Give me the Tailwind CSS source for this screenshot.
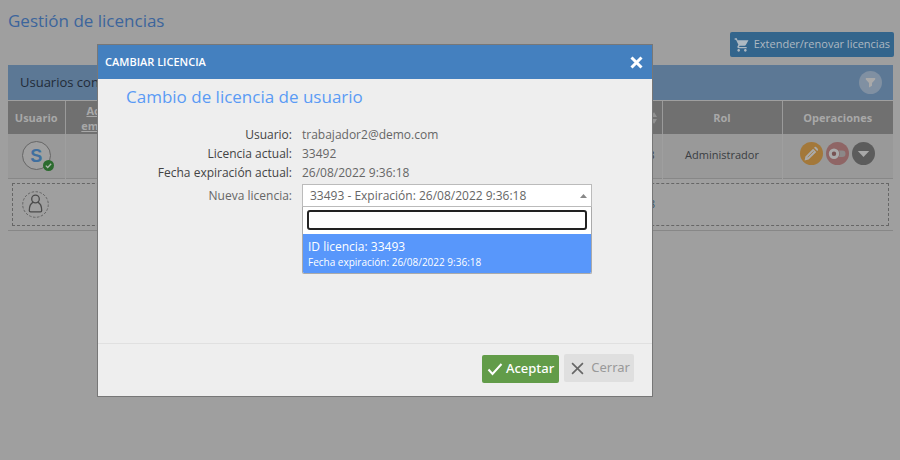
<!DOCTYPE html>
<html lang="es">
<head>
    <meta charset="UTF-8">
    <title>Gestión de licencias</title>
    <meta name="viewport" content="width=device-width, initial-scale=1.0">
    <script src="https://cdn.jsdelivr.net/npm/@tailwindcss/browser@4"></script>
</head>
<body class="min-h-screen bg-[#9f9f9f] font-['Open_Sans',sans-serif] text-xs text-[#3a3d42]">

    <main class="pl-2 pr-[6px] pt-2">
        <h1 class="text-[17px] leading-[26px] font-medium text-[#3c659c]">Gestión de licencias</h1>

        <div class="flex justify-end -mt-[2px]">
            <button type="button" class="flex h-[25px] items-center gap-1 rounded-xs bg-[#33658c] px-1 text-[11px] font-medium text-[#aeb9c2]">
                <svg class="size-4" viewBox="0 0 24 24" fill="currentColor" aria-hidden="true">
                    <path d="M7 18c-1.1 0-2 .9-2 2s.9 2 2 2 2-.9 2-2-.9-2-2-2zM1 2v2h2l3.600 7.600-1.350 2.450C4.520 15.370 5.480 17 7 17h12v-2H7.420l1.130-2h7.450c.75 0 1.410-.41 1.750-1.030L21.700 5H5.210L4.270 2H1zm16 16c-1.100 0-2 .9-2 2s.9 2 2 2 2-.9 2-2-.9-2-2-2z"/>
                </svg>
                Extender/renovar licencias
            </button>
        </div>

        <section class="mr-px mt-2">
            <div class="flex h-[35px] items-center justify-between bg-[#5c7895] pl-3 pr-[11px]">
                <h2 class="text-[13px] font-medium text-[#222b38]">Usuarios con licencia</h2>
                <button type="button" aria-label="Filtrar" class="flex size-[23px] items-center justify-center rounded-full bg-[#8090a2] text-[#a9a9a9]">
                    <svg class="size-[11px]" viewBox="0 0 11 11" fill="currentColor" aria-hidden="true">
                        <path d="M.8 1h9.400v1.600L7 6v2.800L4 10.500V6L.8 2.600z"/>
                    </svg>
                </button>
            </div>

            <table class="mt-px w-full table-fixed border-collapse text-center">
                <colgroup>
                    <col class="w-[57px]">
                    <col class="w-20">
                    <col>
                    <col class="w-[120px]">
                    <col class="w-[120px]">
                    <col class="w-[111px]">
                </colgroup>
                <thead class="bg-[#707070] text-[11px] leading-[15px] text-[#a8a8a8]">
                    <tr class="h-[33px]">
                        <th scope="col" class="border-r border-[#9a9a9a]">Usuario</th>
                        <th scope="col"><a href="#" class="underline">Acceso<br>empresa</a></th>
                        <th scope="col"></th>
                        <th scope="col" class="border-r border-[#9a9a9a]">
                            <div class="flex items-center justify-end gap-2 pr-[5px]">
                                Expiración
                                <svg class="h-3 w-[6px]" viewBox="0 0 6 12" fill="#929292" aria-hidden="true">
                                    <path d="M3 0l3 5H0zM0 7h6l-3 5z"/>
                                </svg>
                            </div>
                        </th>
                        <th scope="col" class="border-r border-[#9a9a9a]">Rol</th>
                        <th scope="col">Operaciones</th>
                    </tr>
                </thead>
                <tbody>
                    <tr class="h-11 border-b border-[#878787] bg-[#999999]">
                        <td class="border-r border-[#9f9f9f]">
                            <div class="relative mx-auto flex size-[29px] items-center justify-center rounded-full border border-[#666] bg-[#a0a0a0] font-['Liberation_Sans',sans-serif] text-lg font-bold text-[#3f6f9f]">
                                S
                                <svg class="absolute -right-1 -bottom-[2px] size-[11px]" viewBox="0 0 11 11" aria-hidden="true">
                                    <circle cx="5.500" cy="5.500" r="5.500" fill="#2b6b2e"/>
                                    <path d="M2.800 5.600l1.900 1.900 3.500-3.800" fill="none" stroke="#aeb8ae" stroke-width="1.300"/>
                                </svg>
                            </div>
                        </td>
                        <td></td>
                        <td></td>
                        <td class="border-r border-[#9f9f9f] pr-[7px] text-right text-[11px] whitespace-nowrap">26/08/2022 9:36:18</td>
                        <td class="border-r border-[#9f9f9f] text-[11px] font-medium">Administrador</td>
                        <td>
                            <div class="flex justify-center gap-[3px] -mt-1">
                                <button type="button" aria-label="Editar" class="size-[23px] rounded-full">
                                    <svg viewBox="0 0 23 23" aria-hidden="true">
                                        <circle cx="11.500" cy="11.500" r="11.500" fill="#a3783a"/>
                                        <path d="M4.600 18.400l.8-4 7.700-7.700 3.200 3.200-7.700 7.700zM14 5.800l.8-.8c.8-.8 3.900 2.300 3.200 3.200l-.8.8z" fill="#aaa"/>
                                        <path d="M7.600 15.300l6-6" stroke="#a3783a" stroke-width=".8"/>
                                    </svg>
                                </button>
                                <button type="button" aria-label="Desactivar" class="size-[23px] rounded-full">
                                    <svg viewBox="0 0 23 23" aria-hidden="true">
                                        <circle cx="11.500" cy="11.500" r="11.500" fill="#8f6565"/>
                                        <rect x="8" y="8.500" width="11.500" height="6.500" rx="3.250" fill="#8c8888"/>
                                        <circle cx="8" cy="11.700" r="5.800" fill="#8f6565"/>
                                        <circle cx="8" cy="11.700" r="3.700" fill="#765252" stroke="#aaa" stroke-width="3"/>
                                    </svg>
                                </button>
                                <button type="button" aria-label="Más opciones" class="size-[23px] rounded-full">
                                    <svg viewBox="0 0 23 23" aria-hidden="true">
                                        <circle cx="11.500" cy="11.500" r="11.500" fill="#5c5c5c"/>
                                        <path d="M5.800 9h11.400l-5.700 6z" fill="#a9a9a9"/>
                                    </svg>
                                </button>
                            </div>
                        </td>
                    </tr>
                    <tr class="border-b border-[#878787]">
                        <td colspan="6" class="p-1">
                            <div class="flex h-[43px] items-center border border-dashed border-[#666] pl-[9px]">
                                <svg class="size-[27px]" viewBox="0 0 27 27" fill="none" stroke="#4b4b4b" aria-hidden="true">
                                    <circle cx="13.500" cy="13.500" r="12.800" stroke="#666" stroke-dasharray="2.500 1.500"/>
                                    <circle cx="13.500" cy="8" r="3.800" stroke-width="1.300"/>
                                    <path d="M11.200 11.200C8.700 12.500 7.300 15.500 7.300 19.500c0 .8.500 1.300 1.300 1.300h9.800c.8 0 1.300-.5 1.300-1.300 0-4-1.400-7-3.900-8.300" stroke-width="1.300"/>
                                </svg>
                                <span class="ml-auto pr-[233px] text-[11px] text-[#34505f]">26/08/2022 9:36:18</span>
                            </div>
                        </td>
                    </tr>
                </tbody>
            </table>
        </section>
    </main>

    <div role="dialog" aria-modal="true" aria-labelledby="dialogTitle"
         class="fixed left-[97px] top-11 w-[556px] border border-[#777] bg-[#eeeeee] text-[#666]">
        <header class="flex h-[34px] items-center justify-between bg-[#4480bf] pl-[7px] pr-[9px] text-white">
            <h2 id="dialogTitle" class="text-[11px] font-semibold">CAMBIAR LICENCIA</h2>
            <button type="button" aria-label="Cerrar ventana">
                <svg class="size-[13px]" viewBox="0 0 13 13" fill="none" stroke="currentColor" stroke-width="3" aria-hidden="true">
                    <path d="M1.500 1.500l10 10M11.500 1.500l-10 10"/>
                </svg>
            </button>
        </header>

        <form>
            <div class="min-h-[265px] border-b border-[#e0e0e0] px-7 pt-1">
                <h3 class="text-[17px] leading-[27px] font-medium text-[#5a9bf5]">Cambio de licencia de usuario</h3>

                <div class="mt-[15px] grid grid-cols-[166px_290px] gap-x-[10px] leading-[19px]">
                    <span class="text-right font-medium text-[#444]">Usuario:</span>
                    <span>trabajador2@demo.com</span>
                    <span class="text-right font-medium text-[#444]">Licencia actual:</span>
                    <span>33492</span>
                    <span class="text-right font-medium text-[#444]">Fecha expiración actual:</span>
                    <span>26/08/2022 9:36:18</span>

                    <label for="license" class="pt-1 text-right">Nueva licencia:</label>
                    <div class="relative mt-[2px]">
                        <select id="license" class="block h-[23px] w-full appearance-none border border-[#bbb] bg-white px-[7px] text-xs text-[#666]">
                            <option>33493 - Expiración: 26/08/2022 9:36:18</option>
                        </select>
                        <svg class="pointer-events-none absolute right-[5px] top-[10px] h-1 w-[7px]" viewBox="0 0 7 4" fill="#888" aria-hidden="true">
                            <path d="M3.500 0L7 4H0z"/>
                        </svg>
                        <div class="overflow-hidden rounded-b-xs border border-t-0 border-[#aaa] bg-white">
                            <div class="p-1 pt-[3px]">
                                <input type="text" aria-label="Buscar licencia" class="block h-5 w-full rounded-[3px] border-2 border-[#222] bg-white px-1 text-xs">
                            </div>
                            <ul role="listbox" aria-label="Licencias">
                                <li role="option" aria-selected="true" class="bg-[#5897fb] px-[5px] pt-[5px] pb-1 text-white">
                                    <div class="text-xs leading-4 font-medium">ID licencia: 33493</div>
                                    <div class="text-[10px] leading-[14px] font-medium">Fecha expiración: 26/08/2022 9:36:18</div>
                                </li>
                            </ul>
                        </div>
                    </div>
                </div>
            </div>

            <footer class="flex justify-end gap-[5px] pt-[10px] pr-[18px] pb-[13px]">
                <button type="button" class="mt-px flex h-7 items-center gap-[3px] rounded-xs bg-[#629c49] px-[5px] font-['Noto_Sans',sans-serif] text-[13px] font-medium text-white">
                    <svg class="size-4" viewBox="0 0 16 16" fill="none" stroke="currentColor" stroke-width="2" aria-hidden="true">
                        <path d="M1.500 8.500l4 4.500 9-10"/>
                    </svg>
                    Aceptar
                </button>
                <button type="button" class="flex h-7 items-center gap-[7px] rounded-xs bg-[#dfdfdf] pr-1 pl-[7px] font-['Noto_Sans',sans-serif] text-[13px] text-[#999]">
                    <svg class="size-[13px]" viewBox="0 0 12 12" fill="none" stroke="#666" stroke-width="1.500" aria-hidden="true">
                        <path d="M1 1l10 10M11 1L1 11"/>
                    </svg>
                    Cerrar
                </button>
            </footer>
        </form>
    </div>

</body>
</html>
